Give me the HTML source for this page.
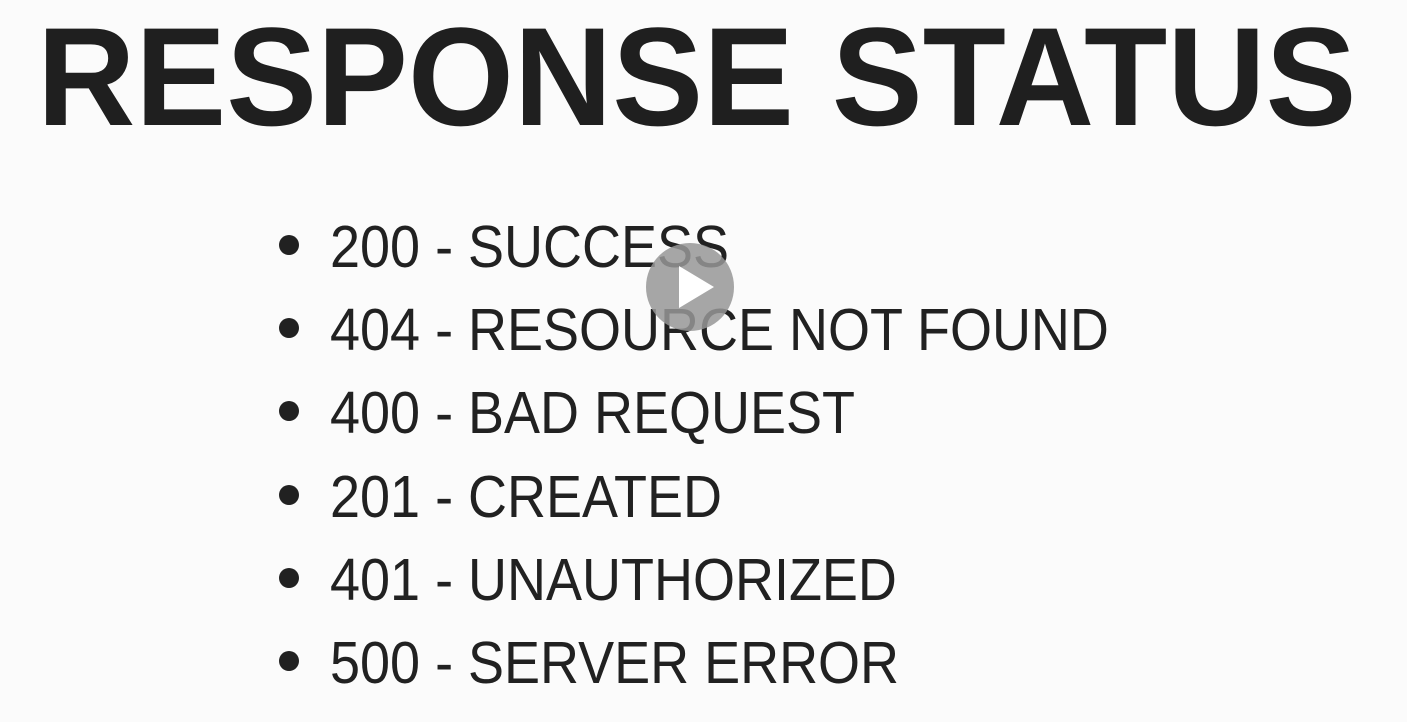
<!DOCTYPE html>
<html><head><style>
html,body{margin:0;padding:0;background:#fbfbfb;width:1407px;height:722px;overflow:hidden;position:relative;font-family:"Liberation Sans",sans-serif;color:#212121}
.t{position:absolute;left:37px;top:2px;font-size:140px;font-weight:bold;line-height:150px;white-space:nowrap;transform:scaleX(0.973);transform-origin:left top;color:#1f1f1f}
.i{position:absolute;left:330px;font-size:59px;line-height:60px;white-space:nowrap;transform:scaleX(0.915);transform-origin:left top}
.b{position:absolute;left:279px;width:20px;height:20px;border-radius:50%;background:#212121}
.p{position:absolute;left:646px;top:243px;width:88px;height:88px;border-radius:50%;background:rgba(150,150,150,0.85)}
</style></head><body>
<div class="t">RESPONSE STATUS</div>
<div class="b" style="top:235px"></div><div class="i" style="top:217px">200 - SUCCESS</div>
<div class="b" style="top:318px"></div><div class="i" style="top:300px">404 - RESOURCE NOT FOUND</div>
<div class="b" style="top:401px"></div><div class="i" style="top:383px">400 - BAD REQUEST</div>
<div class="b" style="top:485px"></div><div class="i" style="top:467px">201 - CREATED</div>
<div class="b" style="top:568px"></div><div class="i" style="top:550px">401 - UNAUTHORIZED</div>
<div class="b" style="top:651px"></div><div class="i" style="top:633px">500 - SERVER ERROR</div>
<div class="p"><svg width="88" height="88"><polygon points="33,23 33,65 68,44" fill="#fff"/></svg></div>
</body></html>
